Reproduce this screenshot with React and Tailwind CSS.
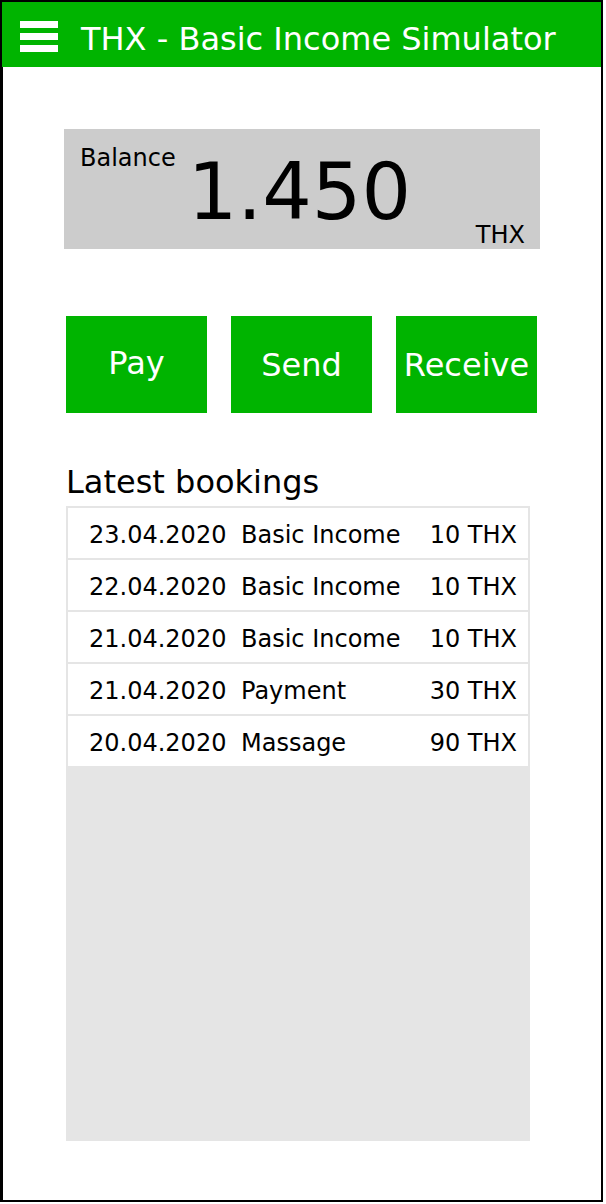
import React from "react";

const bookings = [
  { date: "23.04.2020", text: "Basic Income", amount: "10 THX" },
  { date: "22.04.2020", text: "Basic Income", amount: "10 THX" },
  { date: "21.04.2020", text: "Basic Income", amount: "10 THX" },
  { date: "21.04.2020", text: "Payment", amount: "30 THX" },
  { date: "20.04.2020", text: "Massage", amount: "90 THX" },
];

function App() {
  return (
    <div className="w-[603px] h-[1202px] border-2 border-black flex flex-col bg-white text-black font-['DejaVu_Sans',sans-serif]">
      {/* Header */}
      <header className="h-[65px] shrink-0 bg-[#00b400] flex items-start pt-[19px] pl-[18px]">
        <div className="flex flex-col gap-[5px]">
          <div className="w-[38px] h-[7px] bg-white" />
          <div className="w-[38px] h-[7px] bg-white" />
          <div className="w-[38px] h-[7px] bg-white" />
        </div>
        <h1 className="ml-[23px] mt-[2px] text-[32px] leading-none text-white whitespace-nowrap">
          THX - Basic Income Simulator
        </h1>
      </header>

      <main className="flex-1 border-l border-black flex flex-col">
        {/* Balance */}
        <div className="mt-[62px] ml-[61px] w-[476px] h-[120px] bg-[#cccccc] flex pl-[16px] pr-[15px]">
          <span className="mt-[17px] text-[24px] leading-none">Balance</span>
          <span className="mt-[24px] ml-[12px] text-[78px] leading-none">1.450</span>
          <span className="ml-auto self-end mb-[2px] text-[24px] leading-none">THX</span>
        </div>

        {/* Actions */}
        <div className="mt-[67px] ml-[63px] flex gap-[24px]">
          <button className="w-[141px] h-[97px] bg-[#00b400] text-white text-[32px] leading-none flex items-center justify-center pb-[4px]">
            Pay
          </button>
          <button className="w-[141px] h-[97px] bg-[#00b400] text-white text-[32px] leading-none flex items-center justify-center pt-[1px]">
            Send
          </button>
          <button className="w-[141px] h-[97px] bg-[#00b400] text-white text-[32px] leading-none flex items-center justify-center pt-[1px]">
            Receive
          </button>
        </div>

        {/* Bookings */}
        <h2 className="mt-[53px] ml-[63px] text-[32px] leading-none">Latest bookings</h2>
        <div className="mt-[8px] ml-[63px] w-[464px] h-[635px] bg-[#e5e5e5] p-[2px] flex flex-col gap-[2px]">
          {bookings.map((b, i) => (
            <div
              key={i}
              className="h-[50px] bg-white grid grid-cols-[152px_1fr_auto] items-center pl-[21px] pr-[11px] pt-[3px] text-[24px] leading-none whitespace-nowrap"
            >
              <span>{b.date}</span>
              <span>{b.text}</span>
              <span>{b.amount}</span>
            </div>
          ))}
        </div>
      </main>
    </div>
  );
}

export default App;
